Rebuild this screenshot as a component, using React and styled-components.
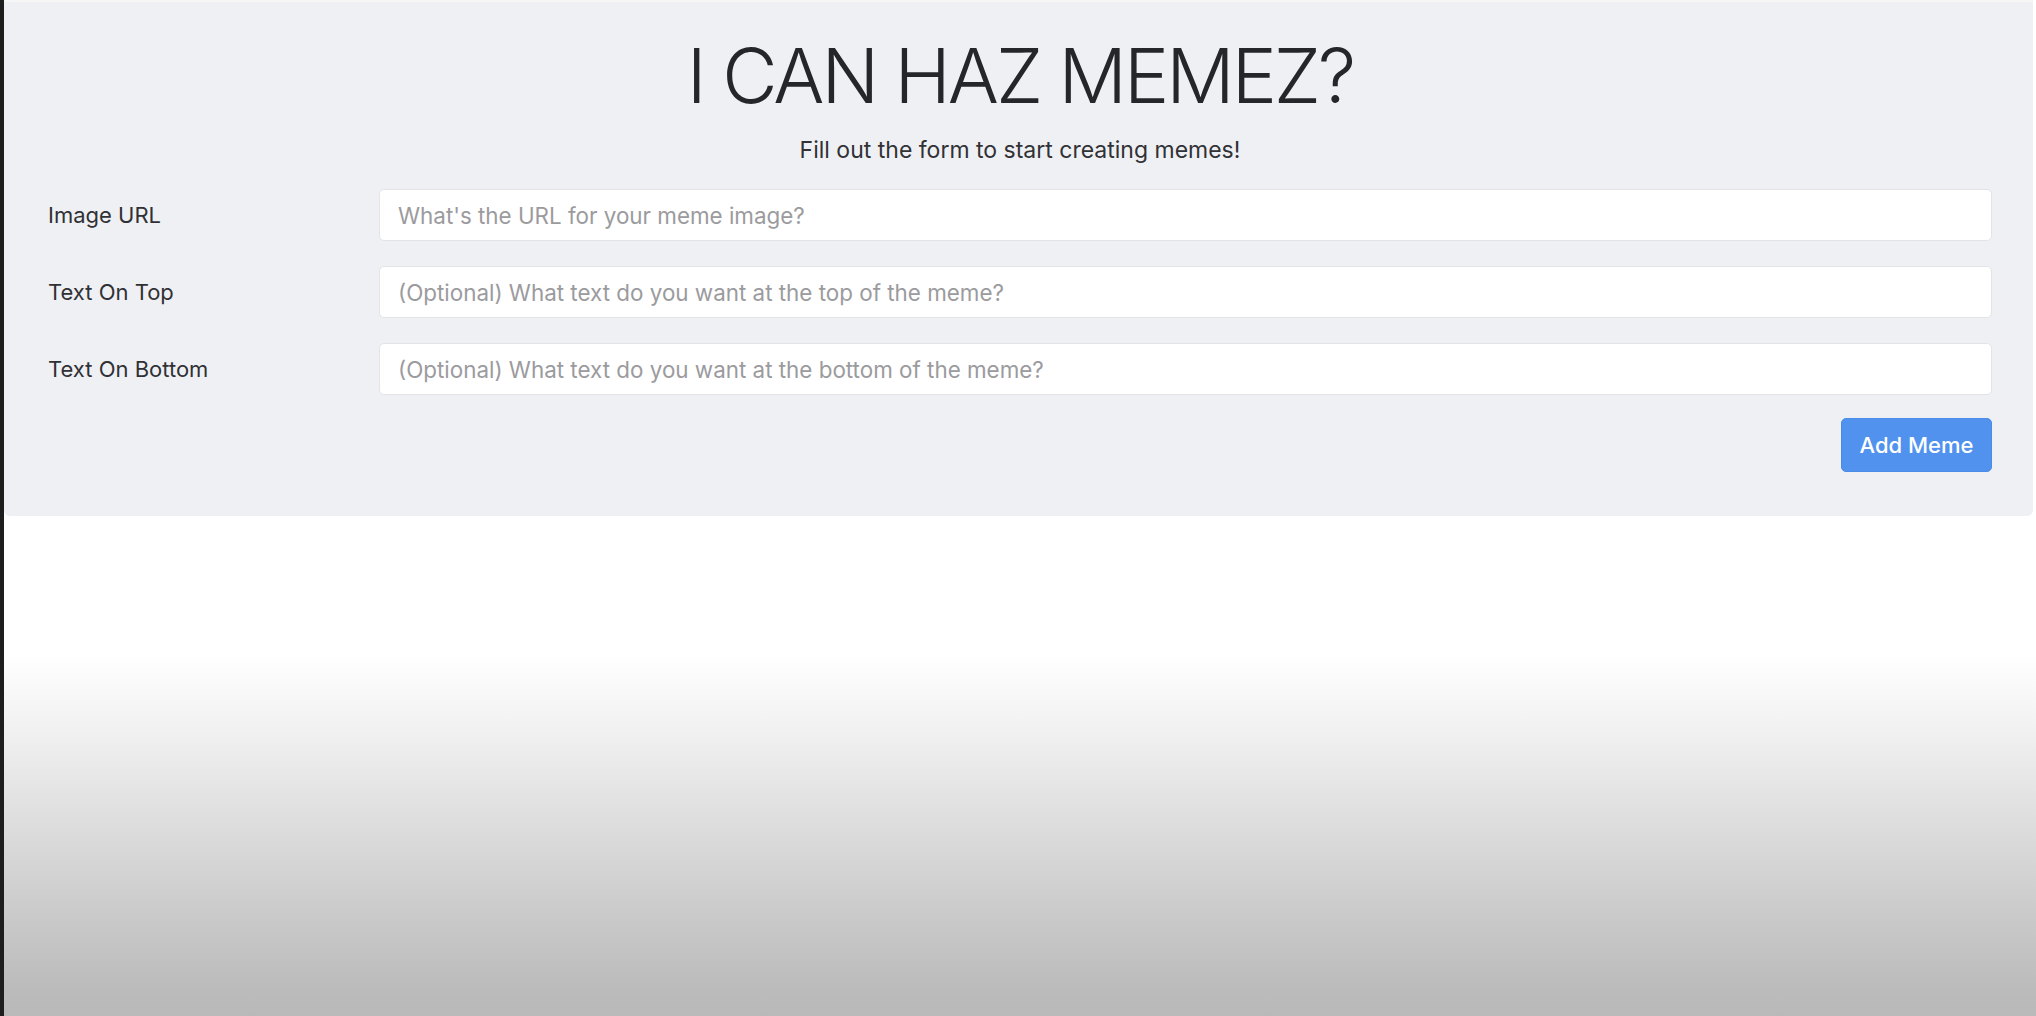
import React from "react";
import styled, { createGlobalStyle } from "styled-components";

const Global = createGlobalStyle`
  html, body { margin: 0; padding: 0; }
  body {
    font-family: Inter, "Noto Sans", "Liberation Sans", sans-serif;
    background: #ffffff;
  }
  * { box-sizing: border-box; }
`;

const Page = styled.div`
  display: flex;
  width: 2036px;
  height: 1016px;
  overflow: hidden;
  background: linear-gradient(
    to bottom,
    #ffffff 0px,
    #ffffff 655px,
    #f3f3f3 720px,
    #dedede 820px,
    #c9c9c9 920px,
    #bbbbbb 990px,
    #b9b9b9 1016px
  );
`;

const EdgeStrip = styled.div`
  width: 4px;
  flex: none;
  background: #1e1e1e;
`;

const Content = styled.main`
  flex: 1;
  padding-right: 3px;
`;

const Jumbotron = styled.section`
  background: #eff0f4;
  border-top: 2px solid #f6f6f7;
  border-radius: 0 0 6px 6px;
  padding: 35px 41px 44px 44px;
  display: flex;
  flex-direction: column;
`;

const Title = styled.h1`
  margin: 0;
  text-align: center;
  font-family: Inter, "Noto Sans", sans-serif;
  font-weight: 300;
  font-size: 76px;
  line-height: 1;
  color: #25262a;
  letter-spacing: -3px;
`;

const Lead = styled.p`
  margin: 21px 0 22px;
  text-align: center;
  font-size: 23px;
  line-height: 33px;
  font-weight: 400;
  color: #313236;
`;

const Form = styled.form`
  display: flex;
  flex-direction: column;
  gap: 25px;
`;

const Row = styled.div`
  display: grid;
  grid-template-columns: 331px 1fr;
  align-items: center;
`;

const Label = styled.label`
  font-size: 22px;
  color: #303135;
`;

const Input = styled.input`
  height: 52px;
  width: 100%;
  padding: 0 18px;
  font-family: Inter, "Noto Sans", sans-serif;
  font-size: 22.4px;
  color: #333;
  background: #ffffff;
  border: 1px solid #e3e4e8;
  border-radius: 5px;
  outline: none;
  &::placeholder {
    color: #9b9b9e;
  }
`;

const Actions = styled.div`
  display: flex;
  justify-content: flex-end;
  margin-top: -2px;
`;

const Button = styled.button`
  width: 151px;
  height: 54px;
  font-family: Inter, "Noto Sans", sans-serif;
  font-size: 22px;
  font-weight: 500;
  color: #ffffff;
  background: #5092ee;
  border: 1px solid #4a8ce8;
  border-radius: 5px;
  cursor: pointer;
`;

const fields = [
  { id: "url", label: "Image URL", placeholder: "What's the URL for your meme image?" },
  { id: "top", label: "Text On Top", placeholder: "(Optional) What text do you want at the top of the meme?" },
  { id: "bottom", label: "Text On Bottom", placeholder: "(Optional) What text do you want at the bottom of the meme?" },
];

export default function App() {
  return (
    <>
      <Global />
      <Page>
        <EdgeStrip />
        <Content>
          <Jumbotron>
            <Title>I CAN HAZ MEMEZ?</Title>
            <Lead>Fill out the form to start creating memes!</Lead>
            <Form onSubmit={(e) => e.preventDefault()}>
              {fields.map((f) => (
                <Row key={f.id}>
                  <Label htmlFor={f.id}>{f.label}</Label>
                  <Input id={f.id} type="text" placeholder={f.placeholder} />
                </Row>
              ))}
              <Actions>
                <Button type="submit">Add Meme</Button>
              </Actions>
            </Form>
          </Jumbotron>
        </Content>
      </Page>
    </>
  );
}
